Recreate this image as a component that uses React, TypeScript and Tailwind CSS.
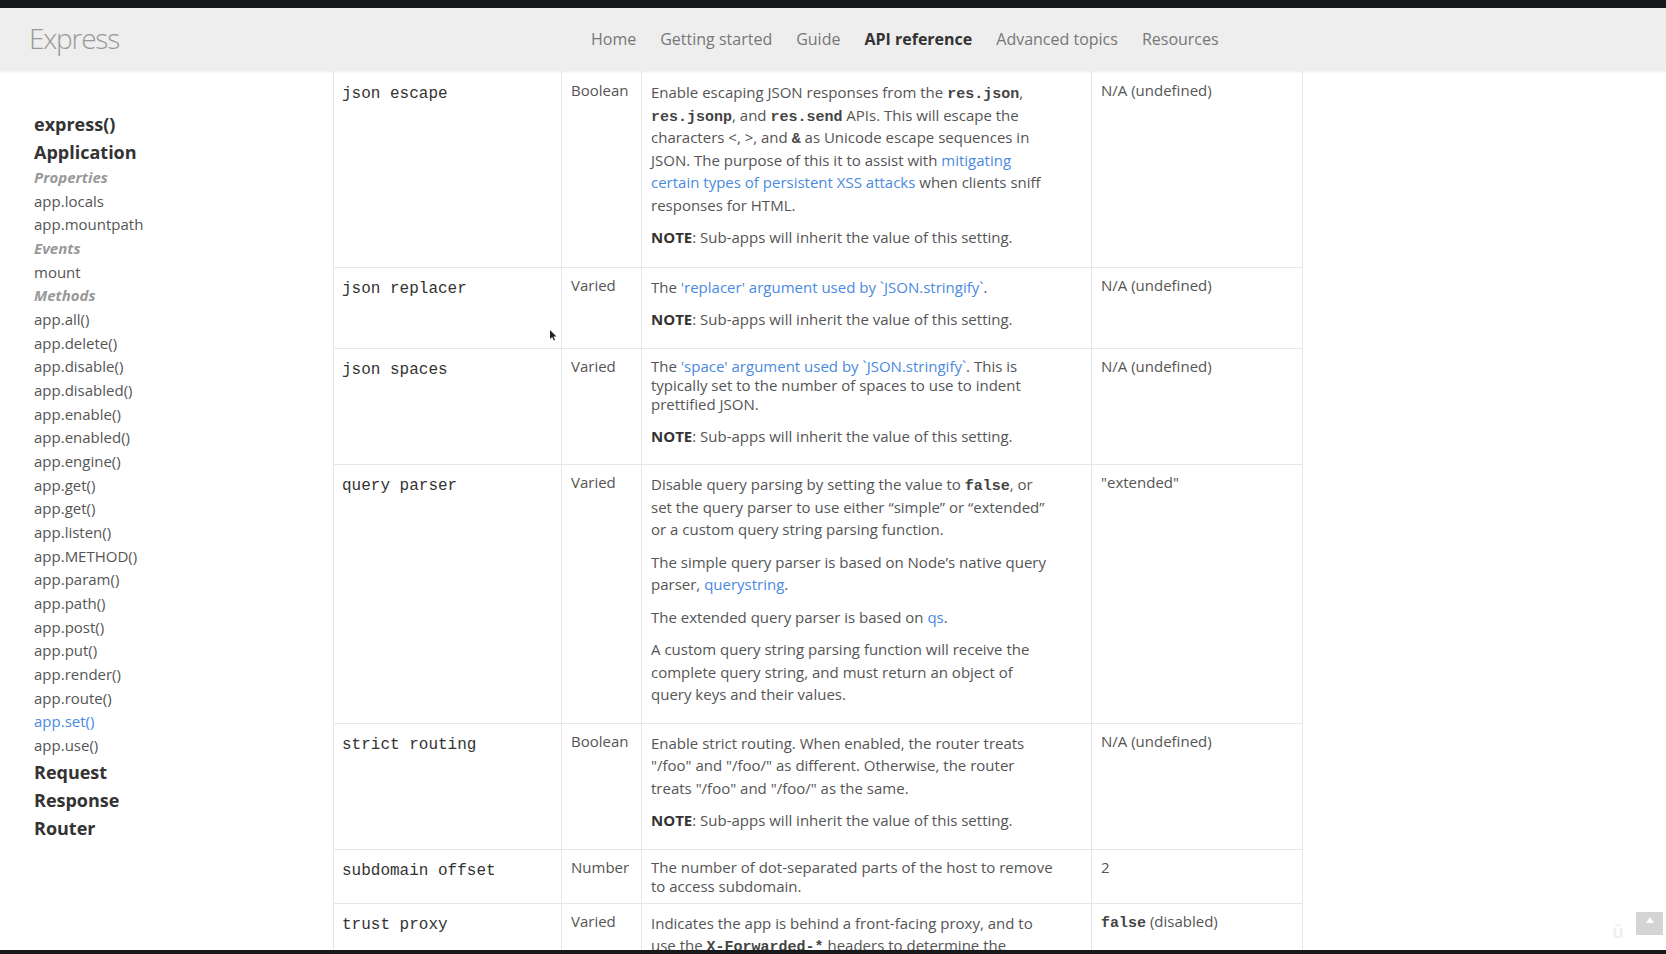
import type { ReactNode } from "react";

type NavItem = { label: string; active?: boolean };

const nav: NavItem[] = [
  { label: "Home" },
  { label: "Getting started" },
  { label: "Guide" },
  { label: "API reference", active: true },
  { label: "Advanced topics" },
  { label: "Resources" },
];

type SideItem = { label: string; kind: "head" | "group" | "link" | "active" };

const side: SideItem[] = [
  { label: "express()", kind: "head" },
  { label: "Application", kind: "head" },
  { label: "Properties", kind: "group" },
  { label: "app.locals", kind: "link" },
  { label: "app.mountpath", kind: "link" },
  { label: "Events", kind: "group" },
  { label: "mount", kind: "link" },
  { label: "Methods", kind: "group" },
  { label: "app.all()", kind: "link" },
  { label: "app.delete()", kind: "link" },
  { label: "app.disable()", kind: "link" },
  { label: "app.disabled()", kind: "link" },
  { label: "app.enable()", kind: "link" },
  { label: "app.enabled()", kind: "link" },
  { label: "app.engine()", kind: "link" },
  { label: "app.get()", kind: "link" },
  { label: "app.get()", kind: "link" },
  { label: "app.listen()", kind: "link" },
  { label: "app.METHOD()", kind: "link" },
  { label: "app.param()", kind: "link" },
  { label: "app.path()", kind: "link" },
  { label: "app.post()", kind: "link" },
  { label: "app.put()", kind: "link" },
  { label: "app.render()", kind: "link" },
  { label: "app.route()", kind: "link" },
  { label: "app.set()", kind: "active" },
  { label: "app.use()", kind: "link" },
  { label: "Request", kind: "head" },
  { label: "Response", kind: "head" },
  { label: "Router", kind: "head" },
];

function Code({ children }: { children: ReactNode }) {
  return (
    <code className="font-['Liberation_Mono',monospace] text-[15px] font-bold leading-[1] text-[#444]">
      {children}
    </code>
  );
}

function A({ children }: { children: ReactNode }) {
  return <a className="text-[#4a8ae0]">{children}</a>;
}

function P({ children }: { children: ReactNode }) {
  return <p className="mb-[10px] leading-[22.5px] whitespace-nowrap">{children}</p>;
}

function Note({ top }: { top?: boolean }) {
  return (
    <p className={`mb-[10px] leading-[22.5px] whitespace-nowrap ${top ? "mt-[11px]" : ""}`}>
      <b className="text-[#333]">NOTE</b>: Sub-apps will inherit the value of this setting.
    </p>
  );
}

type Row = { name: string; type: string; desc: ReactNode; def: ReactNode; first?: boolean };

const rows: Row[] = [
  {
    name: "json escape",
    type: "Boolean",
    first: true,
    desc: (
      <>
        <P>
          Enable escaping JSON responses from the <Code>res.json</Code>,<br />
          <Code>res.jsonp</Code>, and <Code>res.send</Code> APIs. This will escape the
          <br />
          characters &lt;, &gt;, and <Code>&amp;</Code> as Unicode escape sequences in
          <br />
          JSON. The purpose of this it to assist with <A>mitigating</A>
          <br />
          <A>certain types of persistent XSS attacks</A> when clients sniff
          <br />
          responses for HTML.
        </P>
        <Note />
      </>
    ),
    def: "N/A (undefined)",
  },
  {
    name: "json replacer",
    type: "Varied",
    desc: (
      <>
        <P>
          The <A>'replacer' argument used by `JSON.stringify`</A>.
        </P>
        <Note />
      </>
    ),
    def: "N/A (undefined)",
  },
  {
    name: "json spaces",
    type: "Varied",
    desc: (
      <>
        <div className="whitespace-nowrap">
          The <A>'space' argument used by `JSON.stringify`</A>. This is
          <br />
          typically set to the number of spaces to use to indent
          <br />
          prettified JSON.
        </div>
        <Note top />
      </>
    ),
    def: "N/A (undefined)",
  },
  {
    name: "query parser",
    type: "Varied",
    desc: (
      <>
        <P>
          Disable query parsing by setting the value to <Code>false</Code>, or
          <br />
          set the query parser to use either “simple” or “extended”
          <br />
          or a custom query string parsing function.
        </P>
        <P>
          The simple query parser is based on Node’s native query
          <br />
          parser, <A>querystring</A>.
        </P>
        <P>
          The extended query parser is based on <A>qs</A>.
        </P>
        <P>
          A custom query string parsing function will receive the
          <br />
          complete query string, and must return an object of
          <br />
          query keys and their values.
        </P>
      </>
    ),
    def: "\"extended\"",
  },
  {
    name: "strict routing",
    type: "Boolean",
    desc: (
      <>
        <P>
          Enable strict routing. When enabled, the router treats
          <br />
          "/foo" and "/foo/" as different. Otherwise, the router
          <br />
          treats "/foo" and "/foo/" as the same.
        </P>
        <Note />
      </>
    ),
    def: "N/A (undefined)",
  },
  {
    name: "subdomain offset",
    type: "Number",
    desc: (
      <div className="whitespace-nowrap">
        The number of dot-separated parts of the host to remove
        <br />
        to access subdomain.
      </div>
    ),
    def: "2",
  },
  {
    name: "trust proxy",
    type: "Varied",
    desc: (
      <P>
        Indicates the app is behind a front-facing proxy, and to
        <br />
        use the <Code>X-Forwarded-*</Code> headers to determine the
        <br />
        connection and the IP address of the client. NOTE:
        <br />
        <Code>X-Forwarded-*</Code> headers are easily spoofed.
      </P>
    ),
    def: (
      <>
        <Code>false</Code> (disabled)
      </>
    ),
  },
];

export default function App() {
  return (
    <div className="relative flex h-[954px] w-full flex-col overflow-hidden bg-white font-['Open_Sans',sans-serif] text-[#555]">
      <div className="h-[8px] shrink-0 bg-[#17181c]" />

      <header className="z-10 flex h-[63px] shrink-0 items-center bg-[#eeeeee] pl-[29px] shadow-[0_1px_2px_rgba(0,0,0,0.07)]">
        <div className="w-[562px] pb-[4px] text-[28px] font-light tracking-[-1.2px] text-[#999]">Express</div>
        <nav className="flex gap-[24px] pb-[2px] text-[16px]">
          {nav.map((item) => (
            <span key={item.label} className={item.active ? "font-bold text-[#333]" : "text-[#777]"}>
              {item.label}
            </span>
          ))}
        </nav>
      </header>

      <div className="flex min-h-0 flex-1">
        <aside className="w-[333px] shrink-0 pl-[34px] pt-[39px]">
          {side.map((item, i) => {
            if (item.kind === "head") {
              return (
                <div key={i} className="text-[18px] font-bold leading-[28px] text-[#333]">
                  {item.label}
                </div>
              );
            }
            if (item.kind === "group") {
              return (
                <div key={i} className="text-[15px] font-bold italic leading-[23.67px] text-[#999]">
                  {item.label}
                </div>
              );
            }
            return (
              <div
                key={i}
                className={`text-[15px] leading-[23.67px] ${item.kind === "active" ? "text-[#4a8ae0]" : "text-[#555]"}`}
              >
                {item.label}
              </div>
            );
          })}
        </aside>

        <main className="min-w-0 flex-1">
          <table className="w-[969px] table-fixed border-collapse text-[15px] leading-[19px]">
            <colgroup>
              <col className="w-[228px]" />
              <col className="w-[80px]" />
              <col className="w-[450px]" />
              <col className="w-[211px]" />
            </colgroup>
            <tbody>
              {rows.map((r) => {
                const cell = `align-top border border-[#e6e6e6] ${r.first ? "border-t-0 pt-[10px] pb-[8px]" : "pt-[8px] pb-[7px]"}`;
                return (
                  <tr key={r.name}>
                    <td className={`${cell} pl-[8px] pr-[8px]`}>
                      <div className="pt-[2px] font-['Liberation_Mono',monospace] text-[16px] leading-[22.5px] text-[#333]">
                        {r.name}
                      </div>
                    </td>
                    <td className={`${cell} pl-[9px] pr-[4px]`}>{r.type}</td>
                    <td className={`${cell} pl-[9px] pr-[4px]`}>{r.desc}</td>
                    <td className={`${cell} pl-[9px] pr-[8px]`}>{r.def}</td>
                  </tr>
                );
              })}
            </tbody>
          </table>
        </main>
      </div>

      <div className="h-[4px] shrink-0 bg-[#17181c]" />

      {/* mouse pointer left in the capture */}
      <svg className="absolute left-[550px] top-[330px]" width="8" height="11" viewBox="0 0 8 11">
        <path d="M0 0 L0 9 L2.2 7 L3.8 10.5 L5 10 L3.5 6.6 L6.5 6.6 Z" fill="#222" />
      </svg>

      {/* video watermark */}
      <div className="absolute left-[1612px] top-[918px] text-[18px] font-bold text-[#f0f0f0]">ü</div>
      <div className="absolute left-[1636px] top-[912px] flex h-[23px] w-[27px] items-start justify-center bg-[#d4d4d4] pt-[5px]">
        <svg width="8" height="6" viewBox="0 0 8 6">
          <path d="M4 0 L8 6 L0 6 Z" fill="#fff" />
        </svg>
      </div>
    </div>
  );
}
